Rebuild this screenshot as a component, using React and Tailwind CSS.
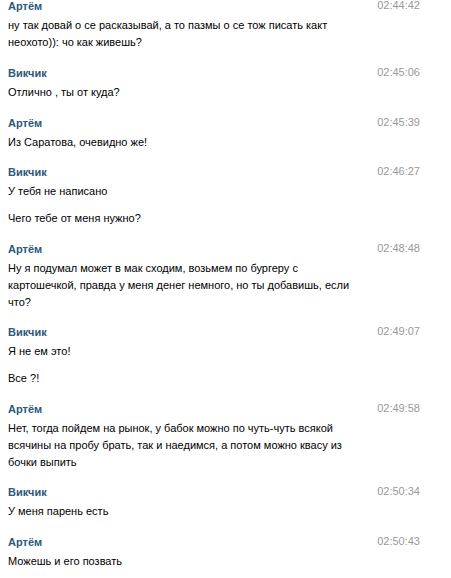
export default function App() {
  const blocks = [
    { n: "Артём", t: "02:44:42", m: [["ну так довай о се расказывай, а то пазмы о се тож писать какт", "неохото)): чо как живешь?"]] },
    { n: "Викчик", t: "02:45:06", m: [["Отлично , ты от куда?"]] },
    { n: "Артём", t: "02:45:39", m: [["Из Саратова, очевидно же!"]] },
    { n: "Викчик", t: "02:46:27", m: [["У тебя не написано"], ["Чего тебе от меня нужно?"]] },
    { n: "Артём", t: "02:48:48", m: [["Ну я подумал может в мак сходим, возьмем по бургеру с", "картошечкой, правда у меня денег немного, но ты добавишь, если", "что?"]] },
    { n: "Викчик", t: "02:49:07", m: [["Я не ем это!"], ["Все ?!"]] },
    { n: "Артём", t: "02:49:58", m: [["Нет, тогда пойдем на рынок, у бабок можно по чуть-чуть всякой", "всячины на пробу брать, так и наедимся, а потом можно квасу из", "бочки выпить"]] },
    { n: "Викчик", t: "02:50:34", m: [["У меня парень есть"]] },
    { n: "Артём", t: "02:50:43", m: [["Можешь и его позвать"]] },
  ];
  return (
    <div className="w-[451px] h-[578px] overflow-hidden bg-white text-[11px] text-black" style={{ fontFamily: '"Liberation Sans", Arial, sans-serif' }}>
      <div className="pl-[8px] pr-[31px]">
        {blocks.map((b, i) => (
          <div key={i} className={i === 0 ? "" : "mt-[15.75px]"}>
            <div className="flex justify-between items-start h-[13px]">
              <span className="font-bold text-[#2b587a] leading-[13px]">{b.n}</span>
              <span className="text-[#999999] leading-[11px]">{b.t}</span>
            </div>
            <div className="mt-[4px] flex flex-col gap-[9.5px]">
              {b.m.map((lines, j) => (
                <div key={j} className="leading-[17px]">
                  {lines.map((l, k) => (
                    <div key={k}>{l}</div>
                  ))}
                </div>
              ))}
            </div>
          </div>
        ))}
      </div>
    </div>
  );
}
